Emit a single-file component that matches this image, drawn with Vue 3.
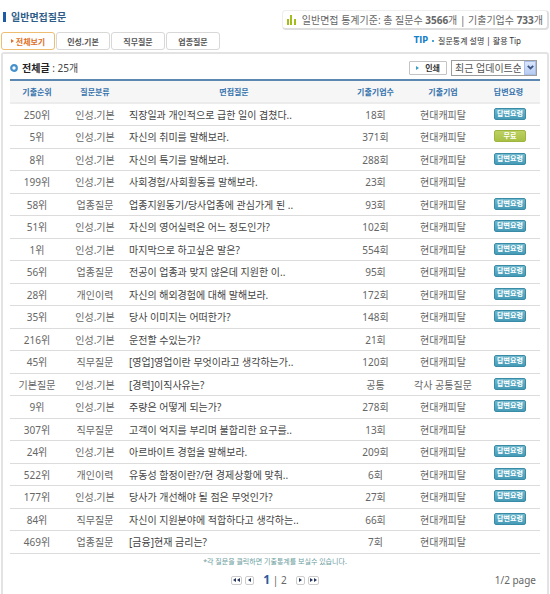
<script setup>
import { ref } from 'vue'

const tabs = ['전체보기', '인성.기본', '직무질문', '업종질문']
const activeTab = ref(0)
const sort = ref('최근 업데이트순')

const company = '현대캐피탈'
const rows = [
  ['250위', '인성.기본', '직장일과 개인적으로 급한 일이 겹쳤다..', '18회', company, 'tip'],
  ['5위', '인성.기본', '자신의 취미를 말해보라.', '371회', company, 'free'],
  ['8위', '인성.기본', '자신의 특기를 말해보라.', '288회', company, 'tip'],
  ['199위', '인성.기본', '사회경험/사회활동를 말해보라.', '23회', company, ''],
  ['58위', '업종질문', '업종지원동기/당사업종에 관심가게 된 ..', '93회', company, 'tip'],
  ['51위', '인성.기본', '자신의 영어실력은 어느 정도인가?', '102회', company, 'tip'],
  ['1위', '인성.기본', '마지막으로 하고싶은 말은?', '554회', company, 'tip'],
  ['56위', '업종질문', '전공이 업종과 맞지 않은데 지원한 이..', '95회', company, 'tip'],
  ['28위', '개인이력', '자신의 해외경험에 대해 말해보라.', '172회', company, 'tip'],
  ['35위', '인성.기본', '당사 이미지는 어떠한가?', '148회', company, 'tip'],
  ['216위', '인성.기본', '운전할 수있는가?', '21회', company, ''],
  ['45위', '직무질문', '[영업]영업이란 무엇이라고 생각하는가..', '120회', company, 'tip'],
  ['기본질문', '인성.기본', '[경력]이직사유는?', '공통', '각사 공통질문', 'tip'],
  ['9위', '인성.기본', '주량은 어떻게 되는가?', '278회', company, 'tip'],
  ['307위', '직무질문', '고객이 억지를 부리며 불합리한 요구를..', '13회', company, ''],
  ['24위', '인성.기본', '아르바이트 경험을 말해보라.', '209회', company, 'tip'],
  ['522위', '개인이력', '유동성 함정이란?/현 경제상황에 맞춰..', '6회', company, 'tip'],
  ['177위', '인성.기본', '당사가 개선해야 될 점은 무엇인가?', '27회', company, 'tip'],
  ['84위', '직무질문', '자신이 지원분야에 적합하다고 생각하는..', '66회', company, 'tip'],
  ['469위', '업종질문', '[금융]현재 금리는?', '7회', company, ''],
].map(([rank, category, question, count, corp, badge]) => ({ rank, category, question, count, corp, badge }))
</script>

<template>
  <main class="page">
    <header class="top">
      <h1 class="title">일반면접질문</h1>
      <p class="stats">
        <svg width="9" height="10" viewBox="0 0 9 10" aria-hidden="true">
          <path d="M0 4h2v6H0zM3 0h2v10H3zM7 4h2v6H7z" fill="#a3bd1c" />
        </svg>
        <span>일반면접 통계기준: 총 질문수 <b>3566</b>개 | 기출기업수 <b>733</b>개</span>
      </p>
    </header>

    <div class="nav-row">
      <nav class="tabs">
        <button
          v-for="(tab, i) in tabs"
          :key="tab"
          type="button"
          class="tab"
          :class="{ active: i === activeTab }"
          @click="activeTab = i"
        >
          <svg v-if="i === activeTab" width="3" height="4" viewBox="0 0 3 4" aria-hidden="true">
            <path d="M0 0l3 2-3 2z" fill="#e0702a" />
          </svg>
          {{ tab }}
        </button>
      </nav>
      <p class="tips">
        <b>TIP</b><i></i><a href="#">질문통계 설명</a> | <a href="#">활용 Tip</a>
      </p>
    </div>

    <section class="panel">
      <div class="toolbar">
        <svg width="8" height="8" viewBox="0 0 8 8" aria-hidden="true">
          <circle cx="4" cy="4" r="2.8" fill="#fff" stroke="#4690cd" stroke-width="2.2" />
        </svg>
        <p class="total"><b>전체글</b> : 25개</p>
        <button type="button" class="print">
          <svg width="3" height="4" viewBox="0 0 3 4" aria-hidden="true">
            <path d="M0 0l3 2-3 2z" fill="#3a9fc6" />
          </svg>
          인쇄
        </button>
        <div class="sort">
          <select v-model="sort" aria-label="정렬">
            <option>최근 업데이트순</option>
          </select>
          <span class="arrow">
            <svg width="7" height="5" viewBox="0 0 7 5" aria-hidden="true">
              <path d="M.8.8l2.7 2.7L6.2.8" fill="none" stroke="#3c5482" stroke-width="1.8" />
            </svg>
          </span>
        </div>
      </div>

      <table class="list">
        <colgroup>
          <col class="c-rank" />
          <col class="c-cat" />
          <col />
          <col class="c-count" />
          <col class="c-corp" />
          <col class="c-badge" />
        </colgroup>
        <thead>
          <tr>
            <th>기출순위</th>
            <th>질문분류</th>
            <th>면접질문</th>
            <th>기출기업수</th>
            <th>기출기업</th>
            <th>답변요령</th>
          </tr>
        </thead>
        <tbody>
          <tr v-for="row in rows" :key="row.question">
            <td>{{ row.rank }}</td>
            <td>{{ row.category }}</td>
            <td class="question"><a href="#">{{ row.question }}</a></td>
            <td>{{ row.count }}</td>
            <td>{{ row.corp }}</td>
            <td class="action">
              <button v-if="row.badge" type="button" class="badge" :class="row.badge">
                {{ row.badge === 'free' ? '무료' : '답변요령' }}
              </button>
            </td>
          </tr>
        </tbody>
      </table>

      <p class="note">*각 질문을 클릭하면 기출통계를 보실수 있습니다.</p>

      <footer class="foot">
        <nav class="pager">
          <button type="button" class="step wide" aria-label="처음">
            <svg width="7" height="4" viewBox="0 0 7 4"><path d="M3 0v4L0 2zM7 0v4L4 2z" fill="#26375c" /></svg>
          </button>
          <button type="button" class="step" aria-label="이전">
            <svg width="3" height="4" viewBox="0 0 3 4"><path d="M3 0v4L0 2z" fill="#26375c" /></svg>
          </button>
          <span class="pages"><b>1</b> | <a href="#">2</a></span>
          <button type="button" class="step" aria-label="다음">
            <svg width="3" height="4" viewBox="0 0 3 4"><path d="M0 0v4l3-2z" fill="#26375c" /></svg>
          </button>
          <button type="button" class="step wide" aria-label="마지막">
            <svg width="7" height="4" viewBox="0 0 7 4"><path d="M0 0v4l3-2zM4 0v4l3-2z" fill="#26375c" /></svg>
          </button>
        </nav>
        <p class="count">1/2 page</p>
      </footer>
    </section>
  </main>
</template>

<style>
body {
  background: #fff;
}
</style>

<style scoped>
.page {
  box-sizing: border-box;
  display: flex;
  flex-direction: column;
  min-height: 100vh;
  padding: 10px 1px 0;
  font: 10px/14px "Noto Sans", "Noto Sans CJK KR", sans-serif;
  color: #666;
}
p,
h1 {
  margin: 0;
}
a {
  color: inherit;
  text-decoration: none;
}
button {
  box-sizing: border-box;
  margin: 0;
  padding: 0;
  font-family: inherit;
  cursor: pointer;
}
svg {
  display: block;
  flex: none;
}
.top {
  display: flex;
  justify-content: space-between;
  align-items: flex-start;
}
.title {
  margin: 2px 0 0 2px;
  padding-left: 5px;
  border-left: 3px solid #1c5ca4;
  font-size: 10px;
  line-height: 10px;
  color: #2d5c88;
}
.stats {
  display: flex;
  align-items: center;
  gap: 6px;
  height: 17px;
  padding: 0 4px;
  border: 1px solid #eee;
  border-right: 2px solid #dedede;
  border-bottom: 2px solid #dedede;
  border-radius: 4px;
}
.nav-row {
  display: flex;
  justify-content: space-between;
  align-items: flex-start;
  margin-top: 2px;
}
.tabs {
  display: flex;
  gap: 1px;
}
.tab {
  display: flex;
  align-items: center;
  justify-content: center;
  gap: 2px;
  width: 54px;
  height: 18px;
  border: 1px solid #d8d8d8;
  border-radius: 3px;
  background: #fff;
  font-size: 8px;
  font-weight: bold;
  color: #555;
}
.tab.active {
  border-color: #ecbd72;
  color: #e0702a;
}
.tips {
  display: flex;
  align-items: center;
  gap: 2px;
  padding: 2px 28px 0 0;
  font-size: 8px;
  color: #333;
}
.tips b {
  font-family: "DejaVu Sans", sans-serif;
  color: #1580c8;
}
.tips i {
  width: 2px;
  height: 2px;
  margin: 0 2px;
  background: #4aa3d8;
}
.panel {
  flex: 1;
  margin-top: 2px;
  padding: 0 7px;
  border: 2px solid #e3e3e3;
  border-bottom: 0;
  border-radius: 3px 3px 0 0;
}
.toolbar {
  display: flex;
  align-items: center;
  height: 25px;
  padding: 2px 3px 0 0;
  box-sizing: border-box;
}
.total {
  flex: 1;
  padding-left: 4px;
  color: #444;
}
.total b {
  color: #222;
}
.print {
  display: flex;
  align-items: center;
  justify-content: center;
  gap: 6px;
  width: 38px;
  height: 14px;
  margin-right: 4px;
  border: 1px solid #c4c4c4;
  border-radius: 1px;
  background: #fff;
  font-size: 8px;
  font-weight: bold;
  color: #333;
}
.sort {
  position: relative;
}
.sort select {
  box-sizing: border-box;
  display: block;
  width: 86px;
  height: 16px;
  padding: 0 15px 0 3px;
  border: 1px solid #9c9c9c;
  border-radius: 0;
  background: #fff;
  appearance: none;
  font: inherit;
  line-height: 14px;
  color: #555;
}
.arrow {
  position: absolute;
  top: 1px;
  right: 1px;
  bottom: 1px;
  display: flex;
  align-items: center;
  justify-content: center;
  width: 12px;
  background: linear-gradient(#dde8fc, #b4caf2);
  box-shadow: inset 0 0 0 1px #a9bfe8;
  pointer-events: none;
}
.list {
  width: 100%;
  table-layout: fixed;
  border-collapse: separate;
  border-spacing: 0;
  border-top: 2px solid #5b87b0;
}
.c-rank {
  width: 54px;
}
.c-cat {
  width: 62px;
}
.c-count {
  width: 67px;
}
.c-corp {
  width: 68px;
}
.c-badge {
  width: 63px;
}
th {
  box-sizing: border-box;
  height: 23px;
  padding: 0;
  border-bottom: 2px solid #ececec;
  background: #f6f6f6;
  font-size: 8px;
  line-height: 14px;
  color: #3573ad;
}
td {
  box-sizing: border-box;
  height: 22px;
  padding: 0;
  border-bottom: 1px solid #dcdcdc;
  text-align: center;
  white-space: nowrap;
}
tr:nth-child(even) td {
  height: 23px;
}
.question {
  padding-left: 3px;
  text-align: left;
  color: #444;
}
.action {
  padding: 0 0 2px 3px;
}
.badge {
  display: block;
  width: 32px;
  height: 12px;
  margin: 0 auto;
  border: 1px solid #398ba6;
  border-radius: 2px;
  background: linear-gradient(#6fb8cd, #459bb7);
  font-size: 7px;
  font-weight: bold;
  line-height: 10px;
  color: #fff;
}
.badge.free {
  border-color: #9eb53f;
  background: linear-gradient(#bdd163, #a8c044);
}
.note {
  margin-top: 1px;
  font-size: 7px;
  text-align: center;
  color: #6a9c9c;
}
.foot {
  display: grid;
  grid-template-columns: 1fr auto 1fr;
  align-items: center;
  margin-top: 4px;
}
.pager {
  grid-column: 2;
  display: flex;
  align-items: center;
  gap: 3px;
}
.step {
  display: flex;
  align-items: center;
  justify-content: center;
  width: 9px;
  height: 9px;
  border: 1px solid #ccc;
  border-radius: 2px;
  background: #fff;
}
.step.wide {
  width: 11px;
}
.pages {
  padding: 0 6px;
}
.pages b {
  font-size: 12px;
  color: #2a5a9c;
}
.count {
  justify-self: end;
  padding-right: 4px;
}
</style>
